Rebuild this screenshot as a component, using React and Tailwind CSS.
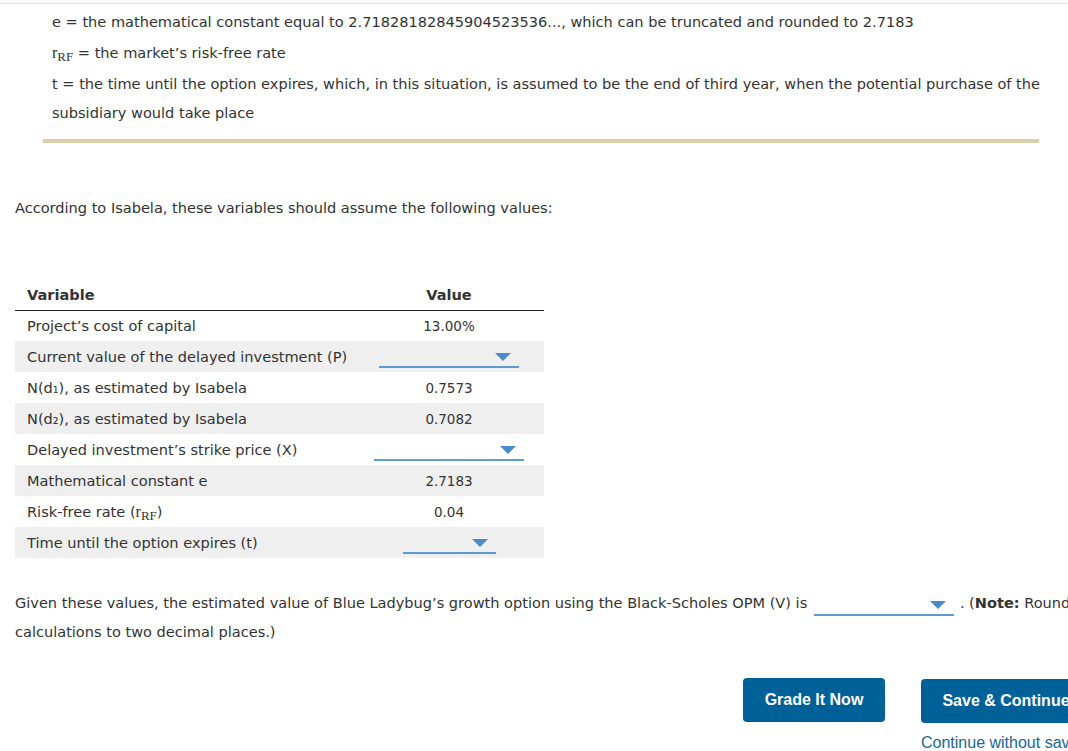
import React from "react";

const font = { fontFamily: "'DejaVu Sans', Verdana, sans-serif" };

function Rrf() {
  return (
    <span className="font-['Liberation_Serif',serif] text-[16px]">
      r<span className="relative top-[3px] text-[13px]">RF</span>
    </span>
  );
}

function Dropdown({ width }) {
  return (
    <span
      className={`inline-flex items-center justify-end h-[20px] border-b-2 border-[#5b9bd1] ${width}`}
    >
      <span className="mr-[8px] w-0 h-0 border-l-[8px] border-r-[8px] border-t-[8px] border-l-transparent border-r-transparent border-t-[#4a8ccb]" />
    </span>
  );
}

const rows = [
  { label: "Project’s cost of capital", value: "13.00%" },
  { label: "Current value of the delayed investment (P)", dd: "w-[140px]" },
  { label: "N(d₁), as estimated by Isabela", value: "0.7573" },
  { label: "N(d₂), as estimated by Isabela", value: "0.7082" },
  { label: "Delayed investment’s strike price (X)", dd: "w-[150px]" },
  { label: "Mathematical constant e", value: "2.7183" },
  { label: <>Risk-free rate (<Rrf />)</>, value: "0.04" },
  { label: "Time until the option expires (t)", dd: "w-[93px]" },
];

export default function App() {
  return (
    <div className="w-[1068px] h-[751px] overflow-hidden bg-white text-[#333] text-[14.55px]" style={font}>
      <div className="w-[1200px]">
        <div className="border-t border-[#e2e2e2] mt-[3px]" />
        <div className="pl-[52px] pt-[3px] leading-[29px]">
          <p>e = the mathematical constant equal to 2.71828182845904523536..., which can be truncated and rounded to 2.7183</p>
          <p className="mt-[2px]"><Rrf /> = the market’s risk-free rate</p>
          <p className="mt-[1px] w-[1000px]">
            t = the time until the option expires, which, in this situation, is assumed to be the end of third year, when the potential purchase of the subsidiary would take place
          </p>
        </div>
        <div className="ml-[43px] mt-[12px] w-[996px] h-[4px] bg-[#dacfa6]" />

        <p className="ml-[15px] mt-[54px]">According to Isabela, these variables should assume the following values:</p>

        <table className="ml-[15px] mt-[65px] w-[529px] border-collapse">
          <thead>
            <tr className="border-b border-[#222]">
              <th className="text-left font-bold pl-[12px] pb-[4px] h-[26px]">Variable</th>
              <th className="font-bold w-[190px] pb-[4px] text-center">Value</th>
            </tr>
          </thead>
          <tbody>
            {rows.map((r, i) => (
              <tr key={i} className={i % 2 === 1 ? "bg-[#efefef] h-[31px]" : "h-[31px]"}>
                <td className="pl-[12px]">{r.label}</td>
                <td className="text-center">
                  {r.dd ? <Dropdown width={r.dd} /> : <span className="text-[13.5px]">{r.value}</span>}
                </td>
              </tr>
            ))}
          </tbody>
        </table>

        <div className="ml-[15px] mt-[31px] leading-[28px] w-[1130px]">
          Given these values, the estimated value of Blue Ladybug’s growth option using the Black-Scholes OPM (V) is{" "}
          <span className="inline-block align-middle ml-[2px] mr-[6px]"><Dropdown width="w-[140px]" /></span>
          . (<b>Note:</b> Round calculations to two decimal places.)
        </div>

        <div className="flex mt-[32px] ml-[743px] gap-[36px] font-['Liberation_Sans',Arial,sans-serif]">
          <button className="w-[142px] h-[44px] rounded-[4px] bg-[#006199] text-white font-bold text-[16px]">Grade It Now</button>
          <div className="flex flex-col">
            <button className="w-[170px] h-[44px] mt-[1px] rounded-[4px] bg-[#006199] text-white font-bold text-[16px]">Save &amp; Continue</button>
            <span className="mt-[8px] text-[16px] leading-[24px] text-[#18679a] whitespace-nowrap">Continue without saving</span>
          </div>
        </div>
      </div>
    </div>
  );
}
